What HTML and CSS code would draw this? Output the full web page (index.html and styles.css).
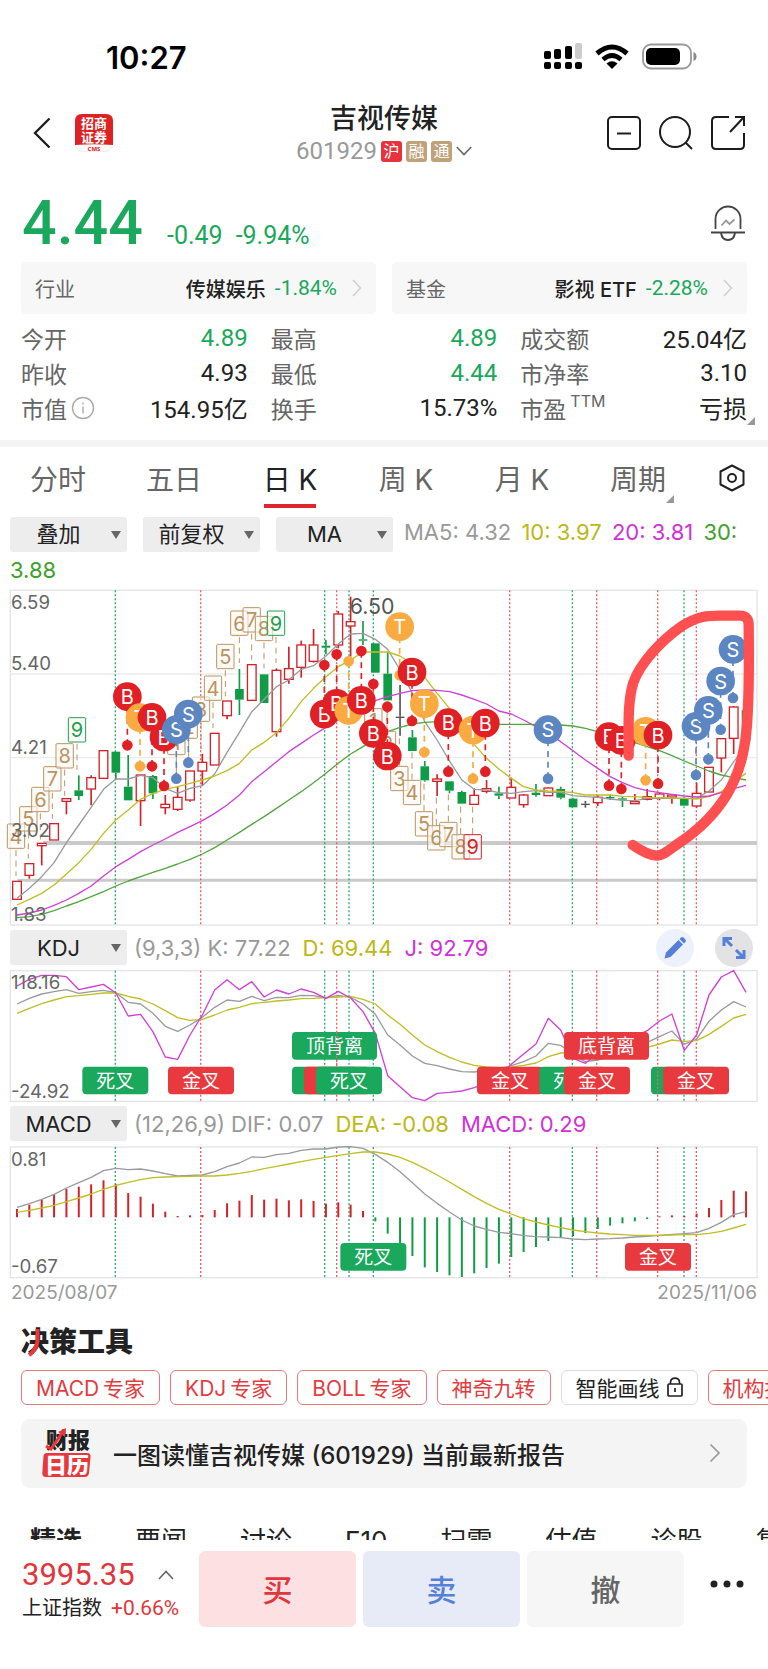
FILE: index.html
```html
<!DOCTYPE html>
<html lang="zh-CN">
<head>
<meta charset="utf-8">
<meta name="viewport" content="width=device-width, initial-scale=1">
<title>吉视传媒 601929</title>
<link rel="stylesheet" href="styles.css">
</head>
<body>
<div class="status">
  <span class="clock">10:27</span>
  <div class="status-icons">
    <svg width="38" height="28" viewBox="0 0 38 28"><g fill="#000"><rect x="0" y="8" width="7" height="8" rx="2"/><rect x="10" y="6" width="7" height="10" rx="2"/><rect x="21" y="3" width="7" height="13" rx="2"/><rect x="0" y="19" width="7" height="7" rx="2"/><rect x="10" y="19" width="7" height="7" rx="2"/><rect x="21" y="19" width="7" height="7" rx="2"/><rect x="31" y="19" width="7" height="7" rx="2"/></g><rect x="31" y="0" width="7" height="16" rx="2" fill="#ccc"/></svg>
    <svg width="34" height="26" viewBox="0 0 34 26"><g fill="none" stroke="#000" stroke-width="5"><path d="M2 9.500 Q17-3.500 32 9.500"/><path d="M8 15.500 Q17 7.500 26 15.500" stroke-width="4.600"/></g><path d="M11.500 19.500 Q17 15 22.500 19.500 L17 25Z"/></svg>
    <svg width="55" height="28" viewBox="0 0 55 28"><rect x="1" y="1.500" width="48" height="24" rx="8" fill="none" stroke="#999" stroke-width="1.800"/><rect x="4" y="5" width="34" height="17" rx="5"/><path d="M51.500 9v9q3-1 3-4.500t-3-4.500z" fill="#888"/></svg>
  </div>
</div>

<header class="nav">
  <div class="nav-left">
    <button class="icon-btn" aria-label="返回"><svg width="18" height="32" viewBox="0 0 18 32"><path d="M16.500 1.500 2 16 16.500 30.500" fill="none" stroke="#1c1c1c" stroke-width="2.300"/></svg></button>
    <svg class="broker" width="38" height="38" viewBox="0 0 38 38"><rect x=".5" y=".5" width="37" height="37" rx="7" fill="#fafafa" stroke="#eee"/><path d="M0 31V7Q0 0 7 0H31Q38 0 38 7V31Q19 29.500 0 31Z" fill="#dc2222"/><g fill="#fff" class="broker-cn"><text x="19" y="14">招商</text><text x="19" y="28">证券</text></g><text x="19" y="36.500" class="broker-en">CMS</text></svg>
  </div>
  <div class="nav-title">
    <h1>吉视传媒</h1>
    <div class="code"><span class="num">601929</span><span class="tag tag-red">沪</span><span class="tag">融</span><span class="tag">通</span><svg width="16" height="10" viewBox="0 0 16 10"><path d="M.8 1 8 8.500 15.200 1" fill="none" stroke="#666" stroke-width="1.600"/></svg></div>
  </div>
  <div class="nav-right">
    <button class="icon-btn" aria-label="移除自选"><svg width="34" height="34" viewBox="0 0 34 34" fill="none" stroke="#1c1c1c" stroke-width="2"><rect x="1" y="1" width="32" height="32" rx="4"/><path d="M10 17.500H24"/></svg></button>
    <button class="icon-btn" aria-label="搜索"><svg width="34" height="34" viewBox="0 0 34 34" fill="none" stroke="#1c1c1c" stroke-width="2"><circle cx="16" cy="16" r="15"/><path d="M26.500 26.500 33 33"/></svg></button>
    <button class="icon-btn" aria-label="分享"><svg width="34" height="34" viewBox="0 0 34 34" fill="none" stroke="#1c1c1c" stroke-width="2"><path d="M18 1H5Q1 1 1 5V29Q1 33 5 33H29Q33 33 33 29V17M24 1H33V10M33 1 19 16"/></svg></button>
  </div>
</header>

<section class="price">
  <div class="price-line num"><strong>4.44</strong><span>-0.49</span><span>-9.94%</span></div>
  <button class="icon-btn bell" aria-label="提醒"><svg width="36" height="36" viewBox="0 0 36 36" fill="none" stroke="#444" stroke-width="1.800"><path d="M5.500 24V14A12.500 12.500 0 0 1 30.500 14V24M1 27.500H35M11 28Q12 35 18 35T25 28"/><path d="M11.500 20.500 16 15.500 19.500 19 24.500 14.500" stroke="#999"/></svg></button>
</section>

<section class="pills">
  <a class="pill" href="#industry"><span class="pill-k">行业</span><span class="pill-v">传媒娱乐</span><span class="num green">-1.84%</span><svg width="10" height="18" viewBox="0 0 10 18"><path d="M1 1 8.500 9 1 17" fill="none" stroke="#ccc" stroke-width="1.400"/></svg></a>
  <a class="pill" href="#fund"><span class="pill-k">基金</span><span class="pill-v">影视 ETF</span><span class="num green">-2.28%</span><svg width="10" height="18" viewBox="0 0 10 18"><path d="M1 1 8.500 9 1 17" fill="none" stroke="#ccc" stroke-width="1.400"/></svg></a>
</section>

<dl class="stats">
  <div><dt>今开</dt><dd class="green">4.89</dd></div>
  <div><dt>最高</dt><dd class="green">4.89</dd></div>
  <div><dt>成交额</dt><dd>25.04亿</dd></div>
  <div><dt>昨收</dt><dd>4.93</dd></div>
  <div><dt>最低</dt><dd class="green">4.44</dd></div>
  <div><dt>市净率</dt><dd>3.10</dd></div>
  <div><dt>市值<svg width="24" height="24" viewBox="0 0 24 24" fill="none" stroke="#aaa" stroke-width="1.400"><circle cx="12" cy="12" r="10.500"/><path d="M12 10.500V17.500M12 6.500V8.500"/></svg></dt><dd>154.95亿</dd></div>
  <div><dt>换手</dt><dd>15.73%</dd></div>
  <div class="more"><dt>市盈<small>TTM</small></dt><dd>亏损</dd></div>
</dl>

<nav class="periods">
  <button>分时</button><button>五日</button><button class="on">日 K</button><button>周 K</button><button>月 K</button><button class="corner">周期</button>
  <button class="gear" aria-label="设置"><svg width="26" height="28" viewBox="0 0 26 28" fill="none" stroke="#222" stroke-width="2"><path d="M13 1.500 24.500 7.500V20.500L13 26.500 1.500 20.500V7.500Z" stroke-linejoin="round"/><circle cx="13" cy="14" r="4"/></svg></button>
</nav>

<p class="ma-line">
  <span class="pick"><select aria-label="叠加"><option>叠加</option></select></span><span class="pick"><select aria-label="复权"><option>前复权</option></select></span><span class="pick"><select aria-label="主图指标"><option>MA</option></select></span><span class="ma c-gray">MA5: 4.32</span> <span class="ma c-yellow">10: 3.97</span> <span class="ma c-pink">20: 3.81</span> <span class="c-green">30: 3.88</span>
</p>
<svg class="chart" id="price" viewBox="0 27 2304 1011" role="img" aria-label="日K线图"></svg>

<div class="ind">
  <span class="pick"><select aria-label="副图一"><option>KDJ</option></select></span>
  <span class="ind-text"><span class="c-gray">(9,3,3) K: 77.22</span><span class="c-yellow">D: 69.44</span><span class="c-pink">J: 92.79</span></span>
  <button class="round round-blue" aria-label="画线"><svg width="24" height="24" viewBox="0 0 24 24" fill="#5580d8"><path d="M1.500 22.500 3 16.500 15.500 4 20 8.500 7.500 21Z"/><path d="M16.500 3 18 1.500Q19.500.5 21 2L22.200 3.200Q23.500 4.500 22.500 6L21 7.500Z"/></svg></button>
  <button class="round" aria-label="全屏"><svg width="24" height="24" viewBox="0 0 24 24" fill="none" stroke="#5580d8" stroke-width="3"><path d="M10 10 3.500 3.500M2 10V2.500H10M14 14 20.500 20.500M22 14V21.500H14"/></svg></button>
</div>
<svg class="chart" id="kdj" viewBox="0 150 2304 396" role="img" aria-label="KDJ"></svg>

<div class="ind">
  <span class="pick"><select aria-label="副图二"><option>MACD</option></select></span>
  <span class="ind-text"><span class="c-gray">(12,26,9) DIF: 0.07</span><span class="c-yellow">DEA: -0.08</span><span class="c-pink">MACD: 0.29</span></span>
</div>
<svg class="chart" id="macd" viewBox="0 678 2304 399" role="img" aria-label="MACD"></svg>
<div class="dates"><time>2025/08/07</time><time>2025/11/06</time></div>

<h2 class="tools-title">决策工具<svg width="28" height="28" viewBox="0 0 28 28"><path d="M16.500 0V12Q15.500 21 8 26" fill="none" stroke="#e8383d" stroke-width="4"/></svg></h2>
<div class="chips">
  <button>MACD&#8201;专家</button><button>KDJ&#8201;专家</button><button>BOLL&#8201;专家</button><button>神奇九转</button><button class="dark">智能画线<svg width="16" height="20" viewBox="0 0 16 20" fill="none" stroke="#222" stroke-width="1.700"><rect x="1" y="7" width="14" height="12" rx="1"/><path d="M3.500 7V5Q4 1.200 8 1.200T12.500 5V7M8 11V15"/></svg></button><button>机构持仓</button>
</div>
<a class="banner" href="#report">
  <svg width="50" height="50" viewBox="0 0 50 50"><g class="cal"><text x="26" y="20" fill="#222">财报</text><path d="M3 25H45Q49 25 48.500 29L47 45Q46.500 49 42.500 49H4Q0 49 .3 45L1.500 28Q2 25 5 25Z" fill="#e8383d"/><text x="25" y="45" fill="#fff">日历</text></g><path d="M4 18 9 21 20 5" fill="none" stroke="#e8383d" stroke-width="3"/><path d="M16 4 24 0 23 9Z" fill="#e8383d"/></svg>
  <span>一图读懂吉视传媒 (601929) 当前最新报告</span>
  <svg width="12" height="20" viewBox="0 0 12 20"><path d="M1.500 1.500 10 10 1.500 18.500" fill="none" stroke="#999" stroke-width="1.700"/></svg>
</a>
<nav class="sections"><a class="on" href="#s1">精选</a><a href="#s2">要闻</a><a href="#s3">讨论</a><a href="#s4">F10</a><a href="#s5">扫雷</a><a href="#s6">估值</a><a href="#s7">诊股</a><a href="#s8">复盘</a></nav>

<footer class="bar">
  <div class="index">
    <div class="index-top"><span class="num">3995.35</span><svg width="16" height="10" viewBox="0 0 16 10"><path d="M1 9 8 1.500 15 9" fill="none" stroke="#666" stroke-width="1.600"/></svg></div>
    <div class="index-sub">上证指数<span class="num">+0.66%</span></div>
  </div>
  <button class="trade buy">买</button><button class="trade sell">卖</button><button class="trade cancel">撤</button>
  <button class="dots" aria-label="更多"><svg width="34" height="8" viewBox="0 0 34 8" fill="#222"><circle cx="4" cy="4" r="3.500"/><circle cx="17" cy="4" r="3.500"/><circle cx="30" cy="4" r="3.500"/></svg></button>
</footer>
<script src="chart.js"></script>
</body>
</html>
```
FILE: styles.css
```css
* { box-sizing: border-box; }
body { margin: 0; background: #fff; color: #222; font-family: Inter, "Noto Sans CJK SC", sans-serif; overflow-x: hidden; }
button { border: 0; background: none; padding: 0; font: inherit; color: inherit; cursor: pointer; }
a { color: inherit; text-decoration: none; }
svg { display: block; flex: none; }
h1, h2, p, dl, dd { margin: 0; }
.num { font-family: Roboto, "Noto Sans CJK SC", sans-serif; }
.green { color: #1aa85c; }
.c-gray { color: #999; }
.c-yellow { color: #bcb815; }
.c-pink { color: #d032d8; }
.c-green { color: #3fa02c; }

.status { display: flex; justify-content: space-between; align-items: center; height: 96px; padding: 18px 71px 0 106px; color: #000; }
.clock { font-size: 31px; font-weight: 600; }
.status-icons { display: flex; align-items: center; gap: 13px; }

.nav { display: grid; grid-template-columns: 1fr auto 1fr; align-items: center; height: 74px; padding: 0 23px; }
.nav-left { display: flex; align-items: center; gap: 24px; padding-left: 10px; }
.nav-right { display: flex; justify-content: flex-end; gap: 18px; }
.nav-title { text-align: center; padding-top: 2px; }
.broker-cn { font: 700 13px "Noto Sans CJK SC", sans-serif; text-anchor: middle; }
.broker-en { font: 700 6px "Open Sans", sans-serif; text-anchor: middle; fill: #dc2222; }
h1 { font-size: 27px; line-height: 34px; font-weight: 500; }
.code { display: flex; align-items: center; gap: 4px; height: 30px; font-size: 24px; color: #999; }
.tag { width: 21px; height: 21px; border-radius: 3px; background: #bfa27a; color: #fff; font-size: 16px; line-height: 20px; text-align: center; }
.tag-red { background: #e8333c; }

.price { display: flex; align-items: flex-end; justify-content: space-between; height: 92px; padding: 0 22px 9px; }
.price-line { display: flex; align-items: baseline; gap: 13px; color: #1aa85c; font-size: 25px; line-height: 24px; }
.price-line strong { font-size: 61px; line-height: 60px; font-weight: 500; margin-right: 11px; }
.bell { padding-bottom: 12px; }

.pills { display: grid; grid-template-columns: 1fr 1fr; gap: 16px; padding: 0 21px; }
.pill { display: flex; align-items: center; height: 52px; padding: 0 14px; border-radius: 5px; background: #f7f7f7; font-size: 20px; }
.pill-k { flex: 1; color: #666; }
.pill-v { font-weight: 500; margin-right: 9px; }
.pill .num { font-size: 21px; margin-right: 15px; }

.stats { display: grid; grid-template-columns: repeat(3, 1fr); column-gap: 23px; grid-auto-rows: 35px; padding: 6px 21px 15px; font-size: 23px; }
.stats div { display: flex; justify-content: space-between; align-items: center; position: relative; }
.stats dt { display: flex; align-items: center; gap: 4px; color: #666; }
.stats dd { font-family: Roboto, "Noto Sans CJK SC", sans-serif; font-size: 24px; }
.stats small { font-size: 16px; align-self: flex-start; line-height: 20px; }
.more::after, .corner::after { content: ""; position: absolute; right: -8px; bottom: 0; border: 4px solid #999; border-top-color: transparent; border-left-color: transparent; }

.periods { display: grid; grid-template-columns: repeat(6, 29fr) 18fr; height: 74px; border-top: 7px solid #f4f4f4; font-size: 28px; color: #666; }
.periods button { position: relative; padding-bottom: 5px; }
.periods .on { color: #222; }
.periods .on::after { content: ""; position: absolute; left: 50%; bottom: 6px; width: 52px; height: 4px; margin-left: -26px; background: #e0262d; }
.periods .corner::after { right: 22px; bottom: 11px; }
.gear svg { margin: 0 auto; }

.pick { position: relative; display: inline-block; width: 117px; margin-right: 16px; vertical-align: middle; line-height: 0; }
.pick select { appearance: none; width: 100%; height: 35px; border: 0; border-radius: 3px; background: #ededed; color: #222; font: 22px Inter, "Noto Sans CJK SC", sans-serif; text-align: center; text-align-last: center; padding: 0 20px 0 0; }
.pick::after { content: ""; position: absolute; right: 6px; top: 14px; border: 5px solid transparent; border-top: 8px solid #666; border-bottom: 0; pointer-events: none; }
.ma-line { padding: 0 10px; font-size: 22px; line-height: 37px; }
.ma-line .pick:nth-child(3) { margin-right: 11px; }
.ma { margin-right: 4px; }
.chart { width: 100%; height: auto; }
.ind { display: flex; align-items: center; height: 44px; padding: 0 15px 0 10px; font-size: 22px; }
.ind .pick { margin-right: 7px; }
.ind-text { display: flex; gap: 12px; flex: 1; white-space: nowrap; }
.round { display: grid; place-items: center; width: 38px; height: 38px; margin-left: 21px; border-radius: 50%; background: #e3e3e6; }
.round-blue { background: #ecf1fb; }
.dates { display: flex; justify-content: space-between; padding: 0 11px; font-size: 19px; line-height: 28px; color: #999; }

.t-axis { font: 56px Inter, sans-serif; fill: #666; }
.t-peak { font: 64px Inter, sans-serif; fill: #555; }
.t-mark { font: 60px Inter, sans-serif; fill: #fff; text-anchor: middle; }
.t-seq { font: 60px Inter, sans-serif; text-anchor: middle; }
.t-badge { font: 57px "Noto Sans CJK SC", sans-serif; fill: #fff; text-anchor: middle; }

.tools-title { position: relative; padding: 18px 21px 10px; font-size: 28px; line-height: 35px; font-weight: 900; }
.tools-title svg { position: absolute; left: 21px; top: 22px; }
.chips { display: flex; gap: 10px; padding-left: 21px; overflow: hidden; }
.chips button { flex: none; display: flex; align-items: center; gap: 7px; height: 35px; padding: 0 14px; border: 1px solid #e8777b; border-radius: 6px; color: #e23c41; font-size: 21px; white-space: nowrap; }
.chips .dark { color: #222; border-color: #ddd; }
.banner { display: flex; align-items: center; gap: 21px; height: 69px; margin: 14px 21px 0; padding: 0 26px 0 21px; border-radius: 9px; background: #f4f4f4; font-size: 24px; font-weight: 500; }
.banner span { flex: 1; white-space: nowrap; }
.cal { font: 900 22px "Noto Sans CJK SC", sans-serif; text-anchor: middle; }
.sections { display: flex; gap: 53px; height: 18px; margin-top: 34px; padding-left: 30px; overflow: hidden; font-size: 26px; line-height: 38px; }
.sections a { flex: none; }
.sections .on { font-weight: 700; }

.bar { display: grid; grid-template-columns: 170px 1fr 1fr 1fr 53px; gap: 7px; padding: 11px 24px 41px 22px; background: #fff; }
.index { display: flex; flex-direction: column; justify-content: center; gap: 2px; padding-top: 3px; }
.index-top { display: flex; align-items: center; gap: 23px; color: #e0363c; font-size: 31px; line-height: 34px; }
.index-sub { font-size: 20px; line-height: 28px; white-space: nowrap; }
.index-sub .num { color: #e0363c; margin-left: 9px; font-size: 21px; }
.trade { height: 76px; padding-bottom: 2px; border-radius: 6px; font-size: 30px; font-weight: 500; }
.buy { background: #fce0e2; color: #e0363c; }
.sell { background: #e6ebf7; color: #5580d8; }
.cancel { background: #f6f6f6; color: #666; }
.dots { display: flex; align-items: center; justify-content: flex-end; padding-bottom: 9px; }
```
FILE: chart.js
```js
// Chart units are a third of a pixel at the 768px layout width.
const NS = 'http://www.w3.org/2000/svg';
const X = i => 51 + 37.07 * i;
const RED = '#d2232a', GREEN = '#109c46', TAN = '#bb935c';

function add(svg, tag, attrs, text) {
  const el = document.createElementNS(NS, tag);
  for (const k in attrs) el.setAttribute(k, attrs[k]);
  if (text !== undefined) el.textContent = text;
  svg.appendChild(el);
  return el;
}
const vline = (svg, x, y1, y2, color, w, dash) =>
  add(svg, 'path', { d: `M${x} ${y1}V${y2}`, stroke: color, 'stroke-width': w, 'stroke-dasharray': dash || 'none' });
const series = (svg, ys, color) =>
  add(svg, 'polyline', { points: ys.map((y, i) => X(i) + ',' + y).join(' '), fill: 'none', stroke: color, 'stroke-width': 4, 'stroke-linejoin': 'round' });
const frame = (svg, y, h) =>
  add(svg, 'rect', { x: 31, y, width: 2240, height: h, fill: 'none', stroke: '#e4e4e6', 'stroke-width': 4 });

const signals = [[346, 'g'], [602, 'r'], [974, 'g'], [1010, 'r'], [1047, 'g'], [1120, 'g'], [1529, 'r'], [1717, 'g'], [1790, 'r'], [1973, 'r'], [2052, 'g'], [2089, 'r']];
const drawSignals = (svg, y1, y2) =>
  signals.forEach(([x, c]) => vline(svg, x, y1, y2, c === 'g' ? '#35a870' : '#ea6165', 4, '6 6'));

function badge(svg, x, y, kind, text) {
  const w = text.length > 2 ? 255 : 198;
  add(svg, 'rect', { x, y, width: w, height: 83, rx: 12, fill: kind === 'g' ? '#1aa85c' : '#e8393f' });
  if (text) add(svg, 'text', { x: x + w / 2, y: y + 63, class: 't-badge' }, text);
}

// Price chart
const p = document.getElementById('price');
frame(p, 31, 1004);
[282, 533].forEach(y => add(p, 'path', { d: `M31 ${y}H2271`, stroke: '#ebebed', 'stroke-width': 4 }));
add(p, 'path', { d: 'M130 789H2271', stroke: '#cacaca', 'stroke-width': 12 });
add(p, 'path', { d: 'M52 901H2271', stroke: '#cacaca', 'stroke-width': 9 });
drawSignals(p, 31, 1035);

// [direction, high, body top, body bottom, low]
const candles = [
  ['r',904,904,958,958],['r',851,851,886,896],['r',790,790,797,856],['r',731,731,780,780],['r',656,656,664,703],
  ['g',586,631,648,660],['r',586,593,627,676],['r',512,512,595,595],['g',515,515,578,600],['g',525,620,661,661],
  ['r',585,585,662,738],['g',585,588,640,657],['r',645,673,683,703],['r',620,652,688,693],['r',573,573,660,665],
  ['r',522,547,573,615],['r',460,460,555,555],['r',363,363,407,418],['g',267,327,359,405],['r',254,254,361,361],
  ['g',283,283,369,369],['r',265,271,455,470],['r',200,266,298,311],['r',182,195,262,293],['r',147,195,244,248],
  ['g',180,197,203,222],['r',93,102,195,205],['r',50,125,138,230],['g',123,178,182,195],['g',190,190,278,278],
  ['g',217,281,361,361],['k',315,410,414,467],['g',450,472,513,513],['g',543,559,601,605],['r',583,597,604,648],
  ['g',604,604,632,640],['g',632,636,671,671],['r',625,646,673,673],['r',600,626,634,640],['g',620,640,647,657],
  ['r',593,622,654,654],['r',642,645,674,683],['g',612,638,645,650],['r',622,624,647,647],['g',620,627,653,658],
  ['g',653,656,682,682],['k',663,671,675,683],['r',645,652,668,678],['g',645,651,655,660],['g',650,655,659,681],
  ['r',642,665,671,671],['r',627,650,658,661],['r',638,642,653,661],['r',645,645,651,671],['g',652,655,677,677],
  ['r',608,640,678,683],['r',562,562,636,636],['r',475,476,534,577],['r',378,381,475,522],['g',390,390,484,484]];
candles.forEach(([c, hi, top, bot, lo], i) => {
  const x = X(i), col = c === 'r' ? RED : c === 'g' ? GREEN : '#555';
  if (hi < top) vline(p, x, hi, top, col, 5);
  if (lo > bot) vline(p, x, bot, lo, col, 5);
  add(p, 'rect', c === 'r'
    ? { x: x - 13, y: top, width: 26, height: bot - top, fill: '#fff', stroke: col, 'stroke-width': 4 }
    : { x: x - 13, y: top, width: 26, height: bot - top, fill: col });
});

series(p, [955,925,890,848,788,735,682,628,597,597,586,593,625,640,625,617,582,517,457,395,358,320,300,268,257,228,192,162,160,178,208,270,340,425,480,543,600,628,630,638,640,635,632,637,637,647,650,652,657,661,662,655,655,655,655,655,633,600,545,500], '#999a9d');
series(p, [975,958,940,915,882,848,808,760,720,690,658,640,628,620,610,600,588,572,550,510,487,458,415,365,325,290,260,240,216,216,216,228,252,292,340,385,440,493,535,567,595,620,630,633,634,638,645,645,645,649,650,652,653,654,655,657,650,635,605,580], '#c2bd22');
series(p, [1005,999,990,976,960,940,918,888,860,838,815,795,777,757,740,722,700,675,645,605,575,545,515,490,465,442,420,402,380,362,350,340,332,330,331,335,345,358,372,393,402,420,440,460,485,512,540,565,590,608,623,632,638,643,648,651,648,638,626,616], '#cf40d6');
series(p, [1013,1010,1003,992,978,965,950,935,918,903,890,877,865,852,838,822,803,780,757,733,710,685,660,635,608,580,550,522,500,475,455,442,432,427,425,427,428,430,432,433,433,433,433,434,435,438,445,455,465,476,488,500,512,527,543,558,573,585,593,600], '#51a63d');

// Nine-turn sequence boxes: [label, centre x, centre y, colour, below candle]
[['4',48,768],['5',85,716],['6',121,658],['7',157,596],['8',194,527],['9',231,449,'#20a050'],
 ['1',529,487],['2',566,438],['3',603,387],['4',639,324],['5',676,229],['6',718,129],['7',755,119],['8',792,145],['9',828,129,'#20a050'],
 ['1',1120,422,TAN,1],['2',1161,490,TAN,1],['3',1198,595,TAN,1],['4',1236,637,TAN,1],['5',1272,731,TAN,1],['6',1309,773,TAN,1],['7',1345,763,TAN,1],['8',1382,800,TAN,1],['9',1418,800,'#d2232a',1]
].forEach(([t, x, y, c = TAN, below]) => {
  vline(p, x, below ? y - 120 : y + 42, below ? y - 38 : y + 120, TAN, 3, '18 14');
  add(p, 'rect', { x: x - 26, y: y - 36, width: 52, height: 73, rx: 3, fill: '#fcf9f5', 'fill-opacity': 0.6, stroke: c, 'stroke-width': 3 });
  add(p, 'text', { x, y: y + 23, class: 't-seq', fill: c }, t);
});

[['6.59',86],['5.40',269],['4.21',521],['3.02',772],['1.83',1023]].forEach(([t, y]) => add(p, 'text', { x: 33, y, class: 't-axis' }, t));
add(p, 'text', { x: 1049, y: 103, class: 't-peak' }, '6.50');

// Trade markers: [letter, x, y, y of the dot]
const fills = { B: '#e02024', T: '#f9aa40', S: '#5b86c2' };
[['B',382,350,496],['T',420,413,559],['B',456,412,559],['B',492,471,618],['S',529,449,596],['S',565,402,548],
 ['B',973,402,255],['B',1010,370,223],['T',1046,391,244],['B',1084,361,213],['B',1120,460,312],['B',1162,528,380],
 ['T',1199,140,286],['B',1236,276,423],['T',1273,371,517],['B',1345,428,575],['T',1419,450,596],['B',1456,429,575],
 ['S',1644,449,596],['B',1827,470,617],['B',1864,481,627],['T',1937,454,601],['B',1974,465,611],
 ['S',2088,439,585],['S',2125,391,538],['S',2162,303,449],['S',2199,208,354]
].forEach(([t, x, y, dot]) => {
  vline(p, x, y, dot, fills[t], 5, '18 14');
  add(p, 'circle', { cx: x, cy: dot, r: 16, fill: fills[t] });
  add(p, 'circle', { cx: x, cy: y, r: 43, fill: fills[t] });
  add(p, 'text', { x, y: y + 23, class: 't-mark' }, t);
});

add(p, 'path', { d: 'M1886 527C1886 440 1882 365 1900 308C1920 250 1985 180 2043 140C2095 107 2125 107 2160 107H2220Q2246 107 2246 135C2247 220 2247 330 2243 400C2239 500 2222 575 2180 645C2140 710 2085 757 2040 787C2015 803 1990 828 1970 827C1945 826 1920 810 1898 795', fill: 'none', stroke: '#ff5051', 'stroke-width': 31, 'stroke-linecap': 'round', 'stroke-linejoin': 'round' });

// KDJ
const k = document.getElementById('kdj');
frame(k, 152, 392);
drawSignals(k, 152, 544);
series(k, [252,235,222,215,209,220,215,211,218,247,252,280,319,334,315,292,262,240,244,229,242,232,233,226,227,234,226,232,252,283,345,375,408,430,437,447,455,456,452,448,437,425,408,370,376,405,425,420,410,400,385,367,350,333,373,357,304,270,245,261], '#999a9d');
series(k, [280,265,251,240,230,227,223,219,219,229,237,252,272,293,301,298,285,270,262,251,247,243,240,236,235,233,231,229,238,252,285,313,345,375,395,412,426,436,441,443,441,436,429,410,399,397,400,402,400,395,390,382,372,360,364,362,343,319,294,283], '#c2bd22');
series(k, [198,178,166,166,170,209,201,193,219,288,283,335,411,418,345,285,210,179,209,185,231,210,222,207,217,235,214,234,275,340,467,500,533,542,520,517,513,503,491,470,433,402,372,295,330,415,430,400,370,360,350,332,303,282,391,345,225,171,152,217], '#cf40d6');
[[247,440,'g','死叉'],[504,440,'r','金叉'],[876,336,'g','顶背离'],[876,440,'g',''],[912,440,'r',''],[948,440,'g','死叉'],
 [1431,440,'r','金叉'],[1618,440,'g','死叉'],[1692,440,'r','金叉'],[1692,336,'r','底背离'],[1953,440,'g',''],[1989,440,'r','金叉']
].forEach(b => badge(k, ...b));
vline(k, 1010, 336, 440, '#ea6165', 4, '6 6');
vline(k, 1973, 440, 523, '#ea6165', 4, '6 6');
add(k, 'text', { x: 33, y: 208, class: 't-axis' }, '118.16');
add(k, 'text', { x: 33, y: 533, class: 't-axis' }, '-24.92');

// MACD
const m = document.getElementById('macd');
frame(m, 681, 392);
drawSignals(m, 681, 1073);
[867,854,839,823,806,800,793,781,793,819,830,851,875,888,886,885,870,850,842,825,839,836,841,838,843,851,847,854,873,904,941,972,1008,1042,1056,1066,1071,1060,1044,1031,1011,996,981,963,953,948,939,927,917,910,904,897,889,886,888,881,864,840,812,814]
  .forEach((y, i) => vline(m, X(i), Math.min(y, 892), Math.max(y, 892), y < 892 ? RED : GREEN, 6));
series(m, [862,851,838,823,804,788,772,752,745,749,747,753,761,768,766,765,755,740,729,711,712,704,700,691,687,687,681,680,685,703,727,755,788,822,850,876,900,918,928,937,941,947,950,951,953,957,959,957,956,954,951,949,946,943,941,938,925,907,884,875], '#999a9d');
series(m, [877,871,864,856,845,834,822,808,796,787,779,773,771,770,769,768,768,765,760,754,746,739,732,725,718,712,706,701,696,696,702,712,727,745,765,786,808,830,850,868,882,896,906,915,923,930,935,939,942,944,946,946,946,945,944,944,940,934,924,913], '#c2bd22');
badge(m, 1021, 969, 'g', '死叉');
badge(m, 1875, 969, 'r', '金叉');
add(m, 'text', { x: 33, y: 738, class: 't-axis' }, '0.81');
add(m, 'text', { x: 33, y: 1060, class: 't-axis' }, '-0.67');
```
